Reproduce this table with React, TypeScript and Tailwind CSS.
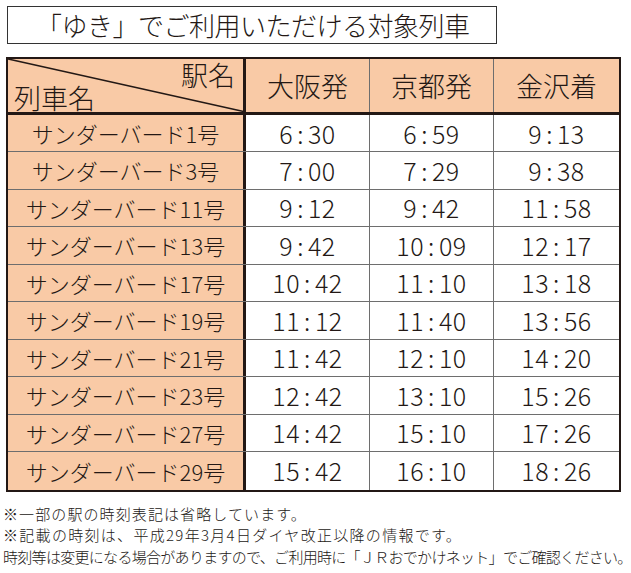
const ROWS = [
  ['サンダーバード1号', '6:30', '6:59', '9:13'],
  ['サンダーバード3号', '7:00', '7:29', '9:38'],
  ['サンダーバード11号', '9:12', '9:42', '11:58'],
  ['サンダーバード13号', '9:42', '10:09', '12:17'],
  ['サンダーバード17号', '10:42', '11:10', '13:18'],
  ['サンダーバード19号', '11:12', '11:40', '13:56'],
  ['サンダーバード21号', '11:42', '12:10', '14:20'],
  ['サンダーバード23号', '12:42', '13:10', '15:26'],
  ['サンダーバード27号', '14:42', '15:10', '17:26'],
  ['サンダーバード29号', '15:42', '16:10', '18:26'],
]

const STATIONS = ['大阪発', '京都発', '金沢着']

function Time({ value }: { value: string }) {
  const [h, m] = value.split(':')
  return (
    <span className="text-[25px] leading-none tracking-[0.5px]">
      {h}
      <span className="mx-[4px]">:</span>
      {m}
    </span>
  )
}

export default function App() {
  return (
    <div className="w-[631px] h-[573px] bg-white text-[#231815] font-light font-['Noto_Sans_CJK_JP',sans-serif]">
      <div className="pt-[6px] pl-[7px]">
        <div className="w-[490px] h-[38px] border-[1.5px] border-[#333] flex items-center pl-[28px]">
          <span className="text-[26px] leading-none tracking-[-0.5px]">「ゆき」でご利用いただける対象列車</span>
        </div>
      </div>

      <div className="mt-[13px] ml-[6px] w-[615px] border-2 border-[#231815]">
        {/* header */}
        <div className="flex h-[56px] border-b-[3px] border-[#231815] bg-[#f9caa6]">
          <div className="relative w-[238px] border-r-[3px] border-[#231815]">
            <svg className="absolute inset-0" width="238" height="53" viewBox="0 0 238 53">
              <line x1="0" y1="0" x2="238" y2="53" stroke="#231815" strokeWidth="1.6" />
            </svg>
            <span className="absolute right-[8px] top-[2px] text-[27px] leading-none">駅名</span>
            <span className="absolute left-[6px] bottom-[1px] text-[27px] leading-none">列車名</span>
          </div>
          {STATIONS.map((s, i) => (
            <div
              key={s}
              className={`flex items-center justify-center text-[27px] leading-none ${
                i < 2 ? 'w-[124px] border-r border-[#6e6e6e]' : 'flex-1'
              }`}
            >
              {s}
            </div>
          ))}
        </div>

        {/* rows */}
        {ROWS.map((r, ri) => (
          <div
            key={r[0]}
            className={`flex ${ri === 0 ? 'h-[37px]' : 'h-[37.5px]'} ${
              ri < ROWS.length - 1 ? 'border-b border-[#6e6e6e]' : ''
            }`}
          >
            <div className="w-[238px] border-r-[3px] border-[#231815] bg-[#f9caa6] flex items-center justify-center text-[22px] leading-none">
              {r[0]}
            </div>
            {r.slice(1).map((t, i) => (
              <div
                key={i}
                className={`flex items-center justify-center ${
                  i < 2 ? 'w-[124px] border-r border-[#6e6e6e]' : 'flex-1'
                }`}
              >
                <Time value={t} />
              </div>
            ))}
          </div>
        ))}
      </div>

      <div className="mt-[11px] pl-[3px] text-[15px] leading-[21.5px] whitespace-nowrap">
        <p className="tracking-[1.1px]">※一部の駅の時刻表記は省略しています。</p>
        <p className="tracking-[1.3px]">※記載の時刻は、平成29年3月4日ダイヤ改正以降の情報です。</p>
        <p className="tracking-[-0.7px]">
          時刻等は変更になる場合がありますので、ご利用時に「ＪＲおでかけネット」でご確認ください。
        </p>
      </div>
    </div>
  )
}
